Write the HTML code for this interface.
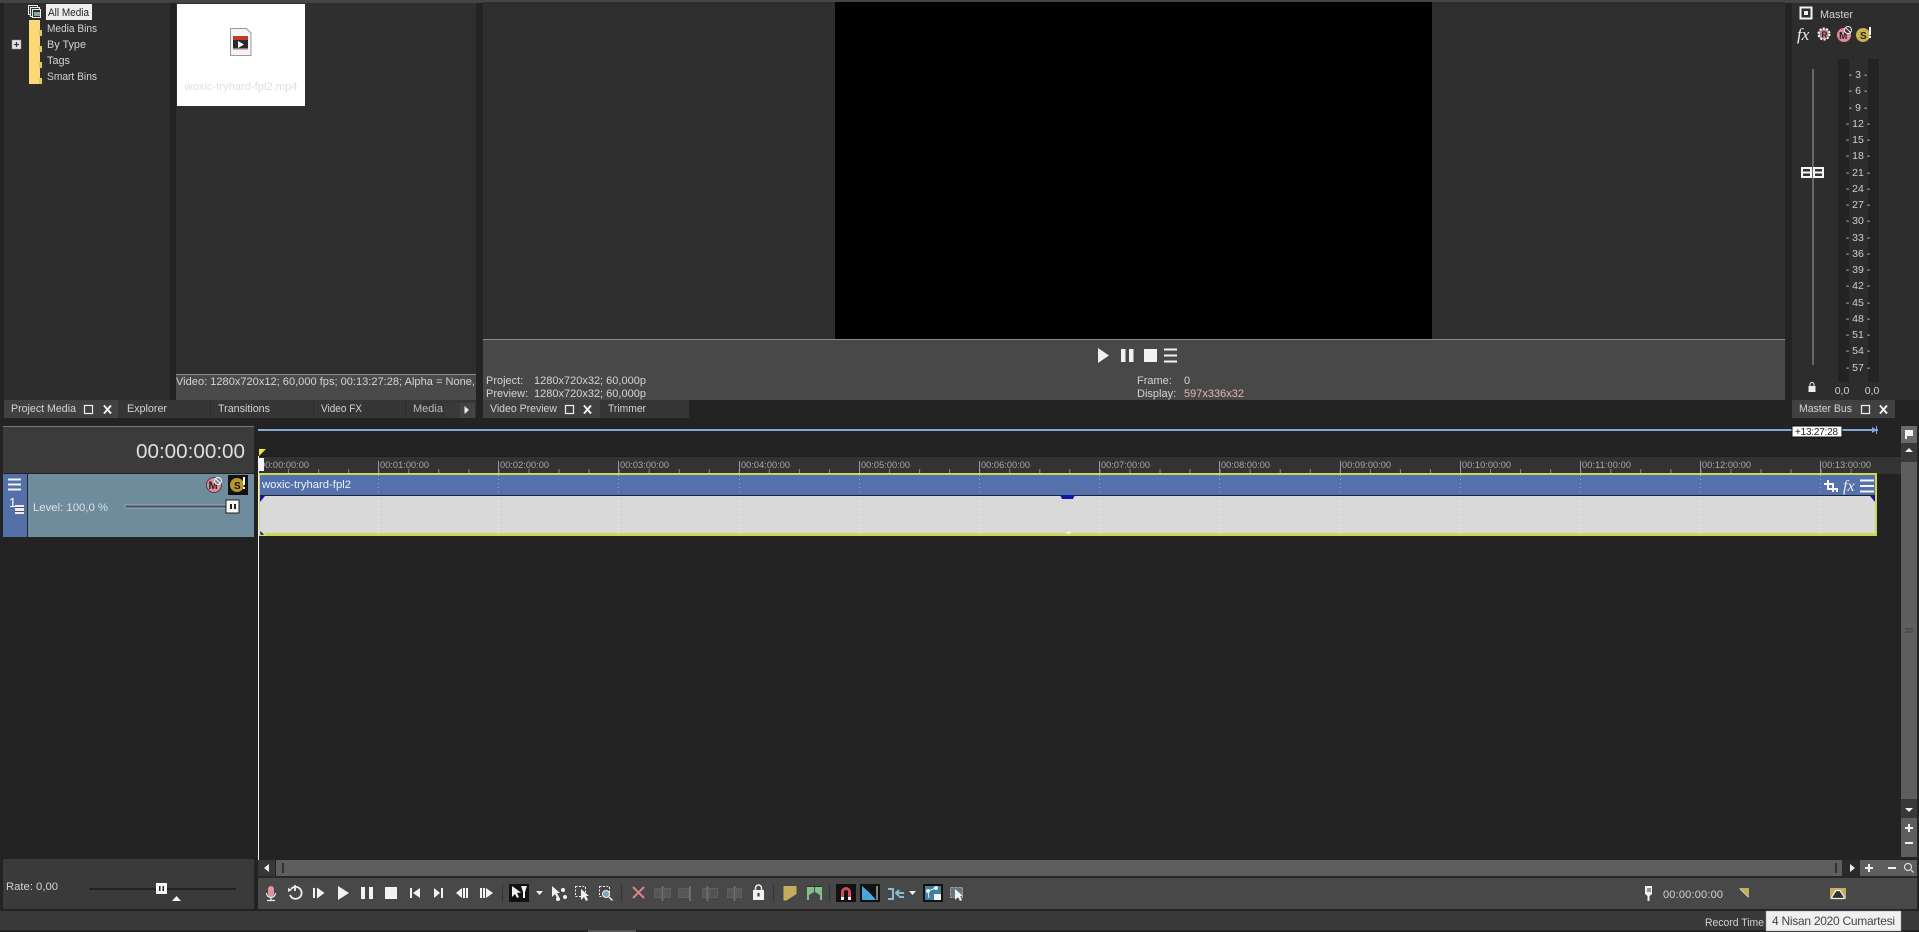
<!DOCTYPE html>
<html><head><meta charset="utf-8"><style>
html,body{margin:0;padding:0;background:#232323;overflow:hidden}
svg{display:block}
text{font-family:"Liberation Sans",sans-serif;font-size:11px;fill:#d4d4d4}
.r{font-size:9.2px;fill:#a8a8a8}
.m{font-size:10.500px;fill:#c8d0d8;text-anchor:middle}
.w{fill:#f2f2f2}
</style></head><body>
<svg width="1919" height="932" viewBox="0 0 1919 932" xmlns="http://www.w3.org/2000/svg">
<defs>
<pattern id="minor" x="258" y="0" width="30.05" height="10" patternUnits="userSpaceOnUse"><rect x="0" width="1" height="10" fill="#8a8a8a"/></pattern>
</defs>
<rect width="1919" height="932" fill="#232323"/>
<!-- top strip -->
<rect width="1919" height="3" fill="#444"/>
<!-- left panels -->
<rect x="4" y="3" width="166" height="397" fill="#2d2d2d"/>
<rect x="176" y="3" width="300" height="371" fill="#2e2e2e"/>
<rect x="176" y="374" width="300" height="26" fill="#4a4a4a"/>
<rect x="176" y="374" width="300" height="1" fill="#8a8a8a"/>
<text x="176" y="385" textLength="299" lengthAdjust="spacingAndGlyphs">Video: 1280x720x12; 60,000 fps; 00:13:27:28; Alpha = None,</text>
<!-- tree -->
<g fill="#fbd977"><path d="M29 20h11v10l2 1v5H29z"/><path d="M29 36h11v10l2 1v5H29z"/><path d="M29 52h11v10l2 1v5H29z"/><path d="M29 68h11v10l2 1v5H29z"/></g>
<g fill="#e0c868"><rect x="39" y="30" width="3" height="6"/><rect x="39" y="46" width="3" height="6"/><rect x="39" y="62" width="3" height="6"/><rect x="39" y="78" width="3" height="6"/></g>
<rect x="46" y="4" width="46" height="16" fill="#eee"/>
<text x="48" y="16" style="fill:#222" textLength="41" lengthAdjust="spacingAndGlyphs">All Media</text>
<text x="47" y="32" textLength="50" lengthAdjust="spacingAndGlyphs">Media Bins</text>
<text x="47" y="48" textLength="39" lengthAdjust="spacingAndGlyphs">By Type</text>
<text x="47" y="64" textLength="23" lengthAdjust="spacingAndGlyphs">Tags</text>
<text x="47" y="80" textLength="50" lengthAdjust="spacingAndGlyphs">Smart Bins</text>
<g fill="none" stroke="#eee" stroke-width="1"><rect x="28.500" y="5.500" width="9" height="9"/><rect x="30.500" y="7.500" width="9" height="9" fill="#2d2d2d"/><rect x="32.500" y="9.500" width="8" height="8" fill="#2d2d2d"/></g>
<rect x="34" y="12" width="6" height="4" fill="#8aa"/>
<rect x="12" y="40" width="9" height="9" fill="#e4e4e8" stroke="#888" stroke-width=".5"/>
<path d="M14 44.500h5M16.500 42v5" stroke="#334" stroke-width="1.200"/>
<!-- thumb -->
<rect x="177" y="4" width="128" height="102" fill="#fff"/>
<path d="M230.500 28.500h16l4.500 4.500v22.500h-20.500z" fill="#f4f4f4" stroke="#999"/>
<rect x="233" y="36" width="15" height="13" fill="#2a2a2a"/>
<rect x="233" y="36" width="15" height="4" fill="#c0392b"/>
<rect x="233" y="48" width="15" height="1.500" fill="#a070a0"/>
<path d="M238 41v7l6-3.500z" fill="#fff"/>
<text x="241" y="90" text-anchor="middle" style="fill:#dfdfdf" textLength="113" lengthAdjust="spacingAndGlyphs">woxic-tryhard-fpl2.mp4</text>
<!-- left tabs -->
<rect x="4" y="400" width="472" height="18" fill="#363636"/>
<rect x="4" y="400" width="114" height="18" fill="#414141"/>
<rect x="210" y="400" width="1" height="18" fill="#2c2c2c"/><rect x="313" y="400" width="1" height="18" fill="#2c2c2c"/><rect x="405" y="400" width="1" height="18" fill="#2c2c2c"/>
<text x="11" y="412" textLength="65" lengthAdjust="spacingAndGlyphs">Project Media</text>
<rect x="84.500" y="405.500" width="8" height="8" fill="none" stroke="#eee" stroke-width="1.200"/>
<path d="M104 405.500l7 8M111 405.500l-7 8" stroke="#f2f2f2" stroke-width="2"/>
<text x="127" y="412" textLength="40" lengthAdjust="spacingAndGlyphs">Explorer</text>
<text x="218" y="412" textLength="52" lengthAdjust="spacingAndGlyphs">Transitions</text>
<text x="321" y="412" textLength="41" lengthAdjust="spacingAndGlyphs">Video FX</text>
<text x="413" y="412" textLength="30" lengthAdjust="spacingAndGlyphs" style="fill:#bbb">Media</text>
<rect x="445" y="403" width="15" height="15" fill="#3a3a3a"/><rect x="460" y="403" width="15" height="15" fill="#434343"/>
<path d="M464.500 406v8l4.500-4z" fill="#eee"/>
<!-- preview -->
<rect x="483" y="0" width="1302" height="339" fill="#2e2e2e"/>
<rect x="483" y="0" width="1302" height="2" fill="#444"/>
<rect x="835" y="2" width="597" height="337" fill="#000"/>
<rect x="483" y="339" width="1302" height="61" fill="#484848"/>
<rect x="483" y="339" width="1302" height="1" fill="#8c8c8c"/>
<path d="M1098 348v15l11-7.500z" fill="#f0f0f0"/>
<rect x="1121" y="349" width="4.500" height="13" class="w"/><rect x="1129" y="349" width="4.500" height="13" class="w"/>
<rect x="1144" y="349" width="13" height="13" class="w"/>
<path d="M1164 349.500h13M1164 355.500h13M1164 361.500h13" stroke="#f2f2f2" stroke-width="2"/>
<text x="486" y="384">Project:</text><text x="534" y="384">1280x720x32; 60,000p</text>
<text x="486" y="397">Preview:</text><text x="534" y="397">1280x720x32; 60,000p</text>
<text x="1137" y="384">Frame:</text><text x="1184" y="384">0</text>
<text x="1137" y="397">Display:</text><text x="1184" y="397" style="fill:#e8b4b4">597x336x32</text>
<rect x="483" y="400" width="206" height="18" fill="#363636"/>
<rect x="483" y="400" width="117" height="18" fill="#414141"/>
<text x="490" y="412" textLength="67" lengthAdjust="spacingAndGlyphs">Video Preview</text>
<rect x="565.500" y="405.500" width="8" height="8" fill="none" stroke="#eee" stroke-width="1.200"/>
<path d="M584 405.500l7 8M591 405.500l-7 8" stroke="#f2f2f2" stroke-width="2"/>
<text x="608" y="412" textLength="38" lengthAdjust="spacingAndGlyphs">Trimmer</text>
<!-- master -->
<rect x="1792" y="3" width="127" height="397" fill="#2d2d2d"/>
<rect x="1838" y="59" width="11" height="323" fill="#232323"/>
<rect x="1868" y="59" width="11" height="323" fill="#232323"/>
<rect x="1800.500" y="7.500" width="11" height="11" fill="none" stroke="#f2f2f2" stroke-width="2"/><rect x="1804" y="11" width="4" height="4" fill="#f2f2f2"/>
<text x="1820" y="18" textLength="33" lengthAdjust="spacingAndGlyphs">Master</text>
<text x="1797" y="40" style="font-family:'Liberation Serif',serif;font-style:italic;font-size:17px;fill:#eee">fx</text>
<circle cx="1824" cy="34" r="5.500" fill="#c08088" stroke="#fff" stroke-width="2" stroke-dasharray="2 1.500"/>
<text x="1821.500" y="37.500" style="fill:#222;font-size:8px;font-weight:bold">R</text>
<circle cx="1844" cy="35" r="7" fill="#e58a9c"/><text x="1839" y="39" style="fill:#222;font-weight:bold;font-size:10px">M</text>
<circle cx="1848" cy="30" r="3.500" fill="#2d2d2d" stroke="#eee"/><path d="M1846 28l4 4" stroke="#eee"/>
<circle cx="1863" cy="35" r="7" fill="#c9b04e"/><text x="1860" y="39" style="fill:#222;font-weight:bold;font-size:10px">S</text>
<rect x="1869" y="27" width="2" height="8" fill="#fff"/><rect x="1869" y="36" width="2" height="2" fill="#fff"/>
<text class="m" x="1858" y="78">- 3 -</text><text class="m" x="1858" y="94">- 6 -</text><text class="m" x="1858" y="111">- 9 -</text>
<text class="m" x="1858" y="127">- 12 -</text><text class="m" x="1858" y="143">- 15 -</text><text class="m" x="1858" y="159">- 18 -</text>
<text class="m" x="1858" y="176">- 21 -</text><text class="m" x="1858" y="192">- 24 -</text><text class="m" x="1858" y="208">- 27 -</text>
<text class="m" x="1858" y="224">- 30 -</text><text class="m" x="1858" y="241">- 33 -</text><text class="m" x="1858" y="257">- 36 -</text>
<text class="m" x="1858" y="273">- 39 -</text><text class="m" x="1858" y="289">- 42 -</text><text class="m" x="1858" y="306">- 45 -</text>
<text class="m" x="1858" y="322">- 48 -</text><text class="m" x="1858" y="338">- 51 -</text><text class="m" x="1858" y="354">- 54 -</text>
<text class="m" x="1858" y="371">- 57 -</text>
<rect x="1812" y="69" width="2" height="296" fill="#666"/>
<rect x="1801" y="167" width="11" height="11" fill="#f5f5f5"/><rect x="1813" y="167" width="11" height="11" fill="#f5f5f5"/>
<g fill="#333"><rect x="1803" y="169" width="7" height="2.500"/><rect x="1803" y="173.500" width="7" height="2.500"/><rect x="1815" y="169" width="7" height="2.500"/><rect x="1815" y="173.500" width="7" height="2.500"/></g>
<rect x="1808.500" y="386" width="7" height="6" fill="#eee"/><path d="M1810 386v-1.500a2 2 0 014 0v1.500" fill="none" stroke="#eee"/>
<text class="m" x="1842" y="394">0,0</text><text class="m" x="1872" y="394">0,0</text>
<rect x="1792" y="400" width="103" height="18" fill="#414141"/>
<text x="1799" y="412" textLength="53" lengthAdjust="spacingAndGlyphs">Master Bus</text>
<rect x="1861.500" y="405.500" width="8" height="8" fill="none" stroke="#eee" stroke-width="1.200"/>
<path d="M1880 405.500l7 8M1887 405.500l-7 8" stroke="#f2f2f2" stroke-width="2"/>
<!-- track list header -->
<rect x="3" y="426" width="251" height="47" fill="#3b3b3b"/>
<rect x="3" y="426" width="251" height="1" fill="#777"/>
<text x="136" y="458" style="font-size:20px;fill:#dedede" textLength="109" lengthAdjust="spacingAndGlyphs">00:00:00:00</text>
<rect x="3" y="474" width="24" height="63" fill="#5470a8"/>
<rect x="28" y="474" width="226" height="63" fill="#6f8c9c"/>
<path d="M8 479.500h13M8 484.500h13M8 489.500h13" stroke="#f4f4f4" stroke-width="2"/>
<text x="9" y="507" style="fill:#fff;font-size:13px">1</text>
<rect x="15" y="505" width="9" height="9" fill="#eee"/><path d="M15 507.500h9M15 511.500h9" stroke="#555"/>
<text x="33" y="511" style="fill:#d8e0e4" textLength="75" lengthAdjust="spacingAndGlyphs">Level: 100,0 %</text>
<rect x="125" y="505" width="102" height="3" fill="#4a5a64" stroke="#cfd6da" stroke-width=".5"/>
<rect x="226" y="500" width="13" height="13" fill="#f8f8f8" stroke="#222"/><rect x="230" y="504" width="2" height="5" fill="#222"/><rect x="234" y="504" width="2" height="5" fill="#222"/>
<circle cx="214" cy="485" r="7.500" fill="#e58a9c" stroke="#444"/><text x="208.500" y="489" style="fill:#222;font-weight:bold;font-size:11px">M</text>
<circle cx="218" cy="481" r="3.500" fill="#6f8c9c" stroke="#fff"/><path d="M216 479l4 4" stroke="#fff"/>
<rect x="228" y="475" width="20" height="20" fill="#111"/>
<circle cx="237" cy="485" r="7" fill="#b8982c"/><text x="234" y="489" style="fill:#111;font-weight:bold;font-size:10px">S</text>
<rect x="243" y="477" width="2" height="8" fill="#fff"/><rect x="243" y="487" width="2" height="2" fill="#fff"/>
<!-- timeline top -->
<rect x="258" y="456" width="1643" height="18" fill="#333"/>
<rect x="258" y="456" width="1643" height="1" fill="#1e1e1e"/>
<rect x="258" y="429" width="1620" height="2" fill="#84a8dc"/>
<rect x="1792" y="426" width="50" height="11" fill="#fff" stroke="#111"/>
<text x="1795" y="435" style="fill:#222;font-size:10px" textLength="43">+13:27:28</text>
<path d="M1872 427v6l5-3z" fill="#84a8dc"/><rect x="1876" y="426" width="1" height="8" fill="#84a8dc"/>
<path d="M259 449h7l-7 7z" fill="#f5e23c"/>
<!-- ruler -->
<rect x="258" y="469" width="1622" height="5" fill="url(#minor)"/>
<g fill="#9a9a9a"><rect x="378" y="461" width="1" height="13"/><rect x="498" y="461" width="1" height="13"/><rect x="618" y="461" width="1" height="13"/><rect x="739" y="461" width="1" height="13"/><rect x="859" y="461" width="1" height="13"/><rect x="979" y="461" width="1" height="13"/><rect x="1099" y="461" width="1" height="13"/><rect x="1219" y="461" width="1" height="13"/><rect x="1340" y="461" width="1" height="13"/><rect x="1460" y="461" width="1" height="13"/><rect x="1580" y="461" width="1" height="13"/><rect x="1700" y="461" width="1" height="13"/><rect x="1820" y="461" width="1" height="13"/></g>
<text class="r" x="260" y="468" textLength="49">00:00:00:00</text>
<text class="r" x="380" y="468" textLength="49">00:01:00:00</text>
<text class="r" x="500" y="468" textLength="49">00:02:00:00</text>
<text class="r" x="620" y="468" textLength="49">00:03:00:00</text>
<text class="r" x="741" y="468" textLength="49">00:04:00:00</text>
<text class="r" x="861" y="468" textLength="49">00:05:00:00</text>
<text class="r" x="981" y="468" textLength="49">00:06:00:00</text>
<text class="r" x="1101" y="468" textLength="49">00:07:00:00</text>
<text class="r" x="1221" y="468" textLength="49">00:08:00:00</text>
<text class="r" x="1342" y="468" textLength="49">00:09:00:00</text>
<text class="r" x="1462" y="468" textLength="49">00:10:00:00</text>
<text class="r" x="1582" y="468" textLength="49">00:11:00:00</text>
<text class="r" x="1702" y="468" textLength="49">00:12:00:00</text>
<text class="r" x="1822" y="468" textLength="49">00:13:00:00</text>
<!-- event -->
<rect x="258" y="473" width="1619" height="63" fill="#cdd656"/>
<rect x="260" y="475" width="1615" height="20" fill="#5571ab"/>
<rect x="260" y="495" width="1615" height="1" fill="#1c2433"/>
<rect x="260" y="496" width="1615" height="37" fill="#d9d9d9"/>
<path d="M378.500 475V495M498.500 475V495M618.500 475V495M739.500 475V495M859.500 475V495M979.500 475V495M1099.500 475V495M1219.500 475V495M1340.500 475V495M1460.500 475V495M1580.500 475V495M1700.500 475V495M1820.500 475V495" stroke="#8ea6d4" stroke-dasharray="1 3"/>
<path d="M378.500 496V533M498.500 496V533M618.500 496V533M739.500 496V533M859.500 496V533M979.500 496V533M1099.500 496V533M1219.500 496V533M1340.500 496V533M1460.500 496V533M1580.500 496V533M1700.500 496V533M1820.500 496V533" stroke="#f4f4f4" stroke-dasharray="1 3"/>
<path d="M1060 495h15l-2 4h-11z" fill="#1414a8"/>
<path d="M260 496h5l-5 6z" fill="#1414a8"/><path d="M1875 496h-5l5 6z" fill="#1414a8"/>
<path d="M1066 532h5l-2.500 2z" fill="#fff"/>
<text x="262" y="488" style="fill:#eef2f8" textLength="89" lengthAdjust="spacingAndGlyphs">woxic-tryhard-fpl2</text>
<path d="M1828 480v9h9v3M1824 484h9v8" fill="none" stroke="#f5f5f5" stroke-width="2"/>
<text x="1843" y="491" style="font-family:'Liberation Serif',serif;font-style:italic;font-size:16px;fill:#eee">fx</text>
<path d="M1860 480.500h14M1860 486h14M1860 491.500h14" stroke="#f5f5f5" stroke-width="2"/>
<!-- playhead -->
<rect x="258" y="456" width="1" height="404" fill="#f4f4f4"/>
<rect x="259" y="458" width="5" height="13" fill="#f4f4f4"/>
<path d="M260 530l5 5h-5z" fill="#222" stroke="#eee" stroke-width=".6"/>
<!-- right scrollbar -->
<rect x="1901" y="426" width="16" height="431" fill="#5e5e5e"/>
<rect x="1901" y="426" width="16" height="17" fill="#6a6a6a"/>
<path d="M1905 430h8v6h-6v3h-2z" fill="#f2f2f2"/>
<rect x="1901" y="443" width="16" height="19" fill="#383838"/>
<path d="M1905 452h8l-4-4z" fill="#f2f2f2"/>
<path d="M1905 629h8M1905 632h8" stroke="#3c3c3c"/>
<rect x="1901" y="799" width="16" height="19" fill="#383838"/>
<path d="M1905 808h8l-4 4z" fill="#f2f2f2"/>
<path d="M1905 828h8M1909 824v8M1905 843h8" stroke="#f2f2f2" stroke-width="2"/>
<!-- bottom scrollbar -->
<rect x="258" y="860" width="17" height="16" fill="#383838"/>
<path d="M269 864v8l-5-4z" fill="#eee"/>
<rect x="276" y="860" width="1566" height="16" fill="#5e5e5e"/>
<rect x="282" y="863" width="2" height="10" fill="#333"/><rect x="1835" y="863" width="2" height="10" fill="#333"/>
<rect x="1842" y="860" width="18" height="16" fill="#2a2a2a"/>
<path d="M1850 864v8l5-4z" fill="#eee"/>
<rect x="1860" y="860" width="57" height="16" fill="#5e5e5e"/>
<path d="M1865 868h8M1869 864v8M1888 868h8" stroke="#f2f2f2" stroke-width="2"/>
<circle cx="1908" cy="867" r="3.500" fill="none" stroke="#eee"/><path d="M1911 870l2.500 2.500" stroke="#eee"/>
<!-- rate -->
<rect x="3" y="859" width="251" height="50" fill="#3a3a3a"/>
<text x="6" y="890" textLength="52" lengthAdjust="spacingAndGlyphs">Rate: 0,00</text>
<rect x="89" y="888" width="147" height="2" fill="#222"/>
<rect x="156" y="883" width="11" height="11" fill="#f8f8f8"/><rect x="159" y="886" width="1.500" height="5" fill="#222"/><rect x="162.500" y="886" width="1.500" height="5" fill="#222"/>
<path d="M172 901h9l-4.500-5z" fill="#f2f2f2"/>
<!-- transport -->
<rect x="258" y="878" width="1659" height="31" fill="#484848"/>
<rect x="258" y="876.500" width="1659" height="1.500" fill="#2a2a2a"/>
<rect x="268" y="886" width="6" height="11" rx="3" fill="#e0939c"/><path d="M266.500 893a4.500 4.500 0 009 0M271 898v2M267 900.500h8" fill="none" stroke="#eee" stroke-width="1.200"/>
<path d="M291 889a6 6 0 11-1 6M295 885v6" fill="none" stroke="#eee" stroke-width="1.800"/><path d="M288 892v-4l4 2z" fill="#eee"/>
<rect x="313" y="888" width="2" height="10" class="w"/><path d="M317 887.500v11l7.500-5.500z" class="w"/>
<path d="M338 886v14l11-7z" class="w"/>
<rect x="361" y="887" width="4" height="12" class="w"/><rect x="369" y="887" width="4" height="12" class="w"/>
<rect x="385" y="887" width="12" height="12" class="w"/>
<rect x="410" y="888" width="2" height="10" class="w"/><path d="M420 888v10l-7-5z" class="w"/>
<path d="M434 888v10l6-5z" class="w"/><rect x="441" y="888" width="2" height="10" class="w"/>
<path d="M462 888v10l-6-5z" class="w"/><rect x="463" y="888" width="2" height="10" class="w"/><rect x="466" y="888" width="2" height="10" class="w"/>
<rect x="480" y="888" width="2" height="10" class="w"/><rect x="483" y="888" width="2" height="10" class="w"/><path d="M486 888v10l7-5z" class="w"/>
<rect x="502" y="884" width="1" height="18" fill="#363636"/>
<rect x="509" y="884" width="20" height="18" fill="#111"/>
<path d="M512 886v11l3-3 2 4 2-1-2-4 4-.5z" class="w"/><path d="M521 886h6l-2 6v6h-2v-6z" class="w"/>
<path d="M536 891h7l-3.500 4z" class="w"/>
<path d="M552 886v11l3-3 2 4 2-1-2-4h3z" class="w"/><circle cx="563" cy="890" r="2" class="w"/><circle cx="558" cy="899" r="2" class="w"/><circle cx="565" cy="897" r="2" class="w"/>
<rect x="575.500" y="886.500" width="10" height="10" fill="none" stroke="#eee" stroke-dasharray="2 1.500"/><path d="M581 889v11l3-3 2 4 2-1-2-4h3z" class="w"/>
<rect x="599.500" y="886.500" width="10" height="10" fill="none" stroke="#eee" stroke-dasharray="2 1.500"/><circle cx="606" cy="894" r="3.500" fill="#7fa8c0" stroke="#eee"/><path d="M609 897l3.500 3.500" stroke="#eee" stroke-width="1.500"/>
<rect x="621" y="884" width="1" height="18" fill="#363636"/>
<path d="M633 887l11 11M644 887l-11 11" stroke="#d9878f" stroke-width="2"/>
<g fill="#565656" stroke="#5e5e5e"><rect x="654.500" y="888.500" width="6" height="9"/><rect x="664.500" y="888.500" width="6" height="9"/><rect x="678.500" y="888.500" width="10" height="9"/><rect x="702.500" y="888.500" width="4" height="9"/><rect x="709.500" y="888.500" width="8" height="9" fill="#525252"/><rect x="727.500" y="888.500" width="5" height="9"/><rect x="736.500" y="888.500" width="5" height="9"/></g>
<path d="M662.500 886v15M690 886v15M707.500 886v15M734.500 886v15" stroke="#6c6c6c" stroke-width="2"/>
<rect x="753" y="890" width="11" height="10" class="w"/><path d="M755.500 890v-2a3 3 0 016 0v2" fill="none" stroke="#f2f2f2" stroke-width="1.500"/><rect x="757.500" y="893" width="2" height="3.500" fill="#333"/>
<rect x="773" y="884" width="1" height="18" fill="#363636"/>
<path d="M783.500 886h13v8l-10 6.500h-3z" fill="#c4ae5e"/>
<path d="M807 887h7v5l-5 3v5h-2zM822 887h-7v5l5 3v5h2z" fill="#84c08c"/><path d="M807 886.500h15" stroke="#2f2f2f"/>
<rect x="829" y="884" width="1" height="18" fill="#363636"/>
<rect x="836" y="884" width="20" height="18" fill="#111"/>
<path d="M841 900v-8a5 5 0 0110 0v8h-3v-8a2 2 0 00-4 0v8z" fill="#d84860"/><rect x="841" y="897" width="3" height="3" fill="#eee"/><rect x="848" y="897" width="3" height="3" fill="#eee"/>
<rect x="860" y="884" width="20" height="18" fill="#111"/>
<path d="M862 886l8 7-8 7z" fill="#4aa8dc"/><path d="M876 887l-6 6 6 7z" fill="#111"/><path d="M862 900h14l-6-7z" fill="#4aa8dc"/><path d="M877 886v14" stroke="#eee"/>
<path d="M888 889h5v10h-5M896 893h8M899 890l-3 3 3 3M899 897h5" fill="none" stroke="#8ab8d8" stroke-width="2"/>
<path d="M909 891h7l-3.500 4z" class="w"/>
<rect x="923" y="884" width="20" height="18" fill="#111"/>
<rect x="925" y="886" width="16" height="14" fill="#3f7f9f"/><path d="M928 891l8-3M928 891l1 7" stroke="#eee"/><circle cx="936" cy="888" r="2" class="w"/><circle cx="928" cy="891" r="2" class="w"/><rect x="934" y="894" width="7" height="6" class="w"/>
<rect x="950.500" y="887.500" width="12" height="10" fill="#5a7a8a" stroke="#d9878f" stroke-dasharray="3 1"/><path d="M955 889v11l3-3 2 4 2-1-2-4h3z" class="w"/>
<!-- bottom right -->
<path d="M1645 886h7v8l-2.500 2v5h-2v-5l-2.500-2z" fill="#f2f2f2"/><rect x="1647.500" y="888" width="1" height="4" fill="#333"/><rect x="1649.500" y="888" width="1" height="4" fill="#333"/>
<text x="1663" y="898" textLength="60">00:00:00:00</text>
<path d="M1739 888h10v10z" fill="#c4ae5e"/><path d="M1740 889l8 8" stroke="#eee" stroke-width=".6"/>
<rect x="1830" y="888" width="16" height="11" fill="#c4ae5e"/><path d="M1832 896.500l4-6h4l4 6v2h-12z" fill="#333" stroke="#f2f2f2" stroke-width="1.200"/>
<!-- status -->
<rect x="0" y="911" width="1919" height="19" fill="#393939"/>
<rect x="588" y="930" width="48" height="2" fill="#555"/>
<text x="1705" y="926" textLength="59" lengthAdjust="spacingAndGlyphs">Record Time</text>
<rect x="1766" y="911" width="135" height="20" fill="#f0f0f0" stroke="#999" stroke-width=".5"/>
<text x="1772" y="925" style="fill:#444;font-size:12px" textLength="123">4 Nisan 2020 Cumartesi</text>
</svg>
</body></html>
